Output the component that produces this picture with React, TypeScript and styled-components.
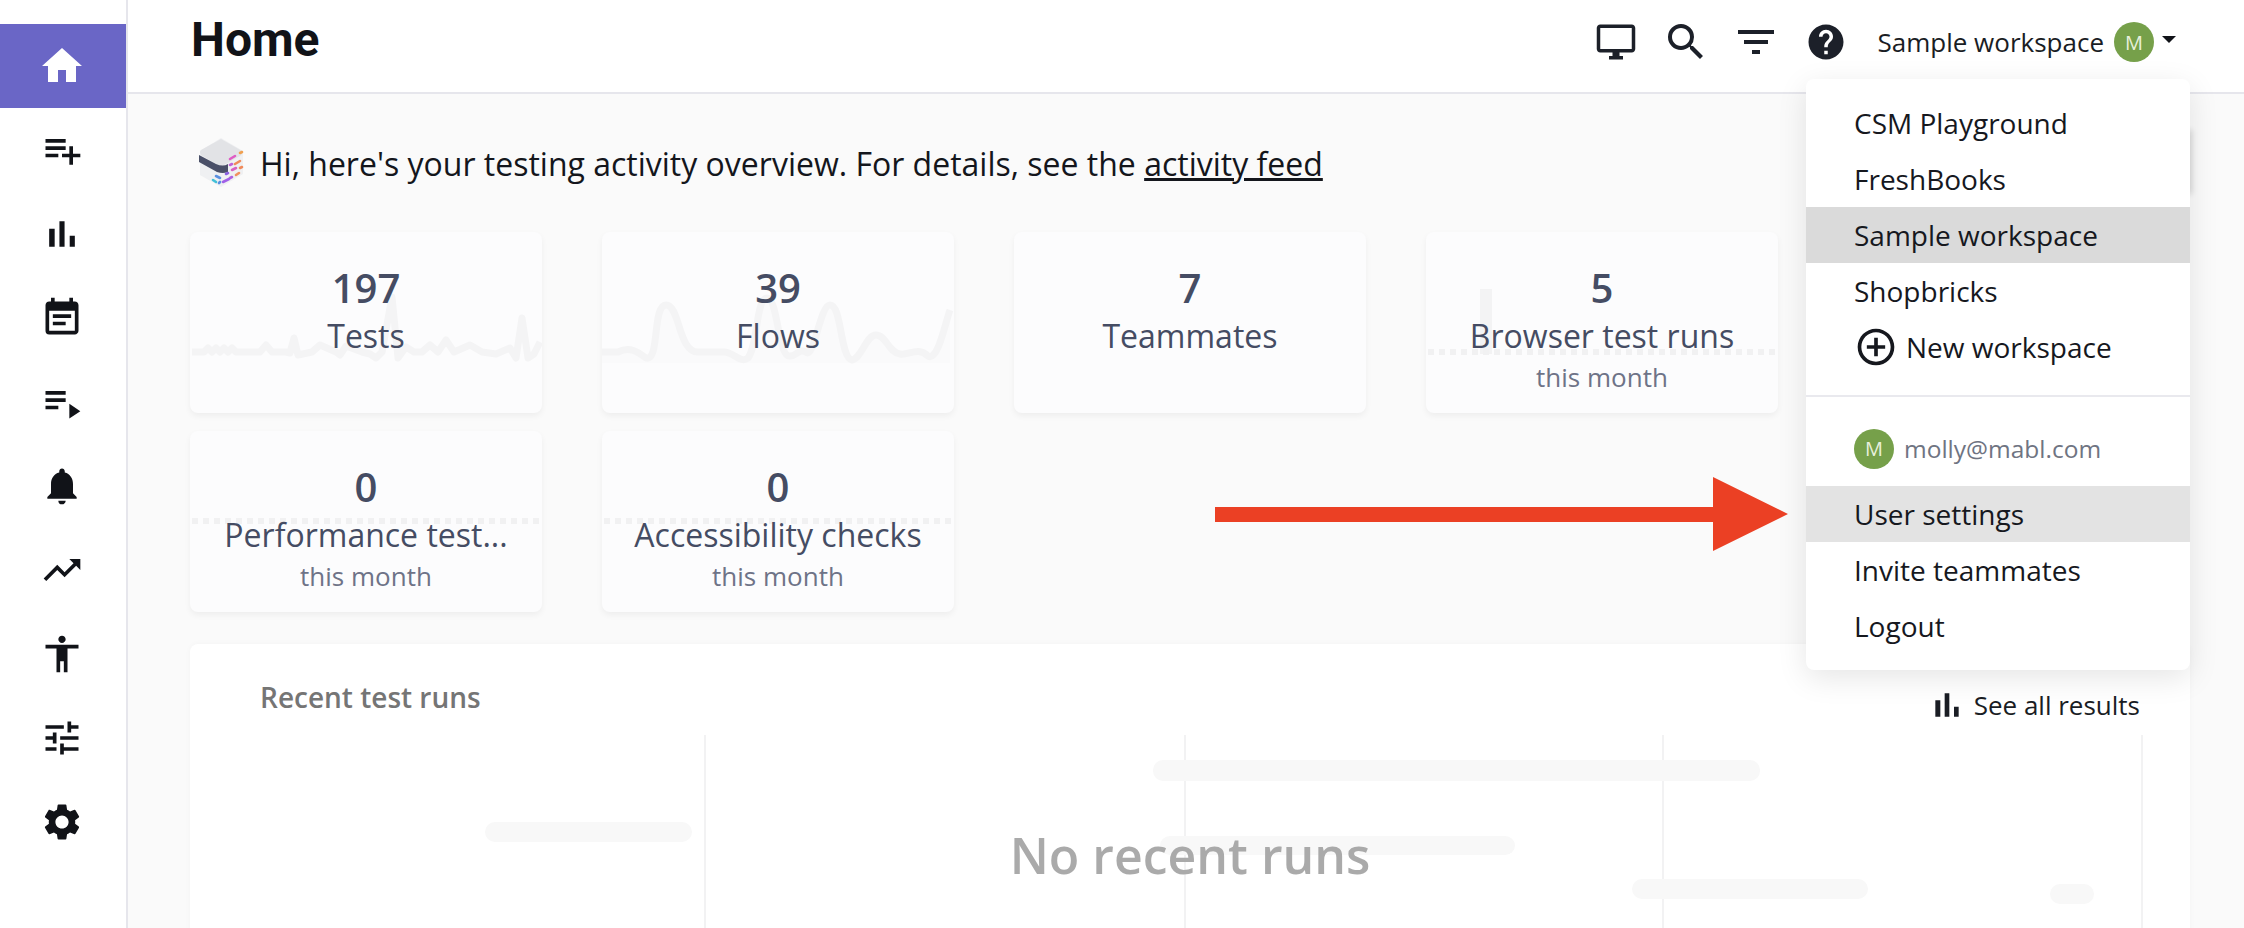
import React from 'react';
import styled, {createGlobalStyle} from 'styled-components';
import {
    MdAccessibility,
    MdAddCircleOutline,
    MdEventNote,
    MdFilterList,
    MdHelp,
    MdHome,
    MdNotifications,
    MdOutlineDesktopWindows,
    MdPlaylistAdd,
    MdPlaylistPlay,
    MdSearch,
    MdSettings,
    MdTrendingUp,
    MdTune,
} from 'react-icons/md';

const GlobalStyle = createGlobalStyle`
    html, body {
        margin: 0;
        padding: 0;
        height: 928px;
        overflow: hidden;
        background: #fafafa;
        font-family: 'Open Sans', 'Liberation Sans', sans-serif;
    }
`;

const Shell = styled.div`
    position: relative;
    display: flex;
    width: 2244px;
    height: 928px;
    overflow: hidden;
`;

const Sidebar = styled.nav`
    box-sizing: border-box;
    flex: 0 0 128px;
    padding-top: 24px;
    background: #fff;
    border-right: 2px solid #e6e6ec;
`;

const NavItem = styled.div<{$active?: boolean}>`
    display: flex;
    align-items: center;
    justify-content: center;
    height: 84px;
    padding-right: 2px;
    color: ${(p) => (p.$active ? '#fff' : '#111318')};
    background: ${(p) => (p.$active ? '#6a66c6' : 'transparent')};
`;

const Main = styled.div`
    flex: 1;
    min-width: 0;
`;

const Header = styled.header`
    box-sizing: border-box;
    display: flex;
    align-items: center;
    justify-content: space-between;
    height: 94px;
    padding: 0 68px 8px 63px;
    background: #fff;
    border-bottom: 2px solid #e6e6ec;
`;

const Title = styled.h1`
    margin: -4px 0 0;
    font-family: Roboto, 'Liberation Sans', sans-serif;
    font-size: 48px;
    font-weight: 700;
    line-height: 60px;
    color: #111318;
`;

const HeaderActions = styled.div`
    display: flex;
    align-items: center;
    color: #1c2029;
`;

const HeaderIcon = styled.span`
    display: flex;
    align-items: center;
    justify-content: center;
    width: 70px;
    height: 48px;
`;

const WorkspaceName = styled.span`
    margin-left: 17px;
    font-size: 26px;
    line-height: 36px;
    color: #1a1d24;
`;

const Avatar = styled.span<{$size: number}>`
    display: inline-flex;
    align-items: center;
    justify-content: center;
    flex: none;
    width: ${(p) => p.$size}px;
    height: ${(p) => p.$size}px;
    border-radius: 50%;
    background: #76a04a;
    color: #e8f0dc;
    font-size: ${(p) => Math.round(p.$size * 0.5)}px;
`;

const HeaderAvatar = styled(Avatar)`
    margin-left: 10px;
`;

const Caret = styled.span`
    width: 0;
    height: 0;
    margin: -6px 0 0 8px;
    border-left: 7px solid transparent;
    border-right: 7px solid transparent;
    border-top: 7px solid #111318;
`;

const Content = styled.div`
    padding: 0 54px 0 62px;
`;

const Welcome = styled.div`
    display: flex;
    align-items: center;
    gap: 15px;
    height: 138px;
    padding-left: 9px;
    font-size: 32px;
    color: #14161c;
`;

const FeedLink = styled.span`
    text-decoration: underline;
`;

// sits under the open menu, only its shadow shows past the menu's right edge
const WelcomeAction = styled.div`
    width: 240px;
    height: 64px;
    margin-left: auto;
    margin-top: -2px;
    background: #fff;
    box-shadow: 2px 0 6px rgba(0, 0, 0, 0.14);
`;

const CardGrid = styled.div`
    display: grid;
    grid-template-columns: repeat(4, 352px);
    grid-auto-rows: 181px;
    column-gap: 60px;
    row-gap: 18px;
`;

const Card = styled.div`
    position: relative;
    display: flex;
    flex-direction: column;
    align-items: center;
    padding-top: 30px;
    box-sizing: border-box;
    overflow: hidden;
    background: #fcfcfd;
    border-radius: 8px;
    box-shadow: 0 3px 6px rgba(0, 0, 0, 0.05);
    color: #454c63;
`;

const Spark = styled.svg`
    position: absolute;
    left: 0;
    top: 0;
`;

const CardValue = styled.div`
    position: relative;
    font-size: 40px;
    font-weight: 600;
    line-height: 52px;
`;

const CardLabel = styled.div`
    position: relative;
    font-size: 32px;
    line-height: 44px;
    white-space: nowrap;
`;

const CardNote = styled.div`
    position: relative;
    margin-top: 2px;
    font-size: 26px;
    line-height: 34px;
    color: #6e7387;
`;

const Panel = styled.section`
    position: relative;
    margin-top: 32px;
    height: 300px;
    background: #fff;
    border-radius: 8px 8px 0 0;
    box-shadow: 0 0 6px rgba(0, 0, 0, 0.03);
`;

const PanelHead = styled.div`
    display: flex;
    align-items: flex-start;
    justify-content: space-between;
    padding: 35px 50px 0 70px;
`;

const PanelTitle = styled.div`
    font-size: 28px;
    font-weight: 600;
    line-height: 36px;
    color: #757575;
`;

const ResultsLink = styled.div`
    display: flex;
    align-items: center;
    gap: 7px;
    margin-top: 6px;
    font-size: 26px;
    line-height: 36px;
    color: #1a1d24;
`;

const RunsChart = styled.svg`
    position: absolute;
    left: 0;
    top: 91px;
`;

const EmptyText = styled.div`
    position: absolute;
    left: 0;
    right: 0;
    top: 178px;
    text-align: center;
    font-size: 50px;
    font-weight: 600;
    line-height: 66px;
    color: #aaa;
`;

const Menu = styled.div`
    position: absolute;
    left: 1806px;
    top: 79px;
    width: 384px;
    padding: 16px 0;
    background: #fff;
    border-radius: 8px;
    box-shadow: 0 8px 30px rgba(0, 0, 0, 0.1);
`;

const MenuItem = styled.div<{$tone?: string}>`
    display: flex;
    align-items: center;
    height: 56px;
    padding: 0 48px;
    font-size: 28px;
    color: #16181e;
    background: ${(p) => p.$tone || 'transparent'};
`;

const NewWorkspace = styled(MenuItem)`
    gap: 8px;
`;

const MenuDivider = styled.div`
    height: 2px;
    margin: 20px 0 0;
    background: #e9e9ee;
`;

const UserRow = styled.div`
    box-sizing: border-box;
    display: flex;
    align-items: center;
    gap: 10px;
    height: 89px;
    padding: 14px 48px 0;
    font-size: 24.5px;
    color: #6f7482;
`;

const ArrowMark = styled.svg`
    position: absolute;
    left: 1215px;
    top: 477px;
`;

const testsLine = 'M2 120 L14 120 L18 116 L22 120 L26 116 L30 120 L34 116 L38 120 L42 116 L46 120 L70 120 L76 113 L82 120 L96 120 L100 121 L104 106 L108 123 L122 120 L130 113 L146 120 L150 123 L156 114 L172 120 L180 122 L186 126 L192 120 L202 65 L208 126 L216 115 L224 120 L232 120 L240 113 L248 120 L256 108 L264 120 L280 113 L292 120 L306 122 L320 116 L326 126 L332 86 L338 126 L344 122 L350 110';
const flowsLine = 'M0 120 L16 120 C28 114 36 120 44 126 C58 130 50 73 64 73 C78 73 76 120 96 120 L122 120 C132 120 138 132 146 126 C156 113 154 66 165 66 C176 66 176 126 188 124 C196 124 196 116 204 120 C212 128 218 73 228 73 C240 73 238 126 250 128 C260 126 264 103 274 103 C284 103 286 120 298 122 C306 124 316 114 326 124 C336 130 344 88 348 78';

const BackgroundLine = ({d, area}: {d: string; area?: boolean}) => (
    <>
        {area && (
            <path
                d={`${d} V131 H0 Z`}
                fill='#fafafb'
            />
        )}
        <path
            d={d}
            fill='none'
            stroke='#f4f4f5'
            strokeWidth={7}
            strokeLinejoin='round'
        />
    </>
);

const DottedLine = ({y}: {y: number}) => (
    <line
        x1={2}
        x2={350}
        y1={y}
        y2={y}
        stroke='#f1f1f2'
        strokeWidth={6}
        strokeDasharray='6 5'
    />
);

const ChartIcon = ({size}: {size: number}) => (
    <svg
        width={size}
        height={size}
        viewBox='0 0 24 24'
        fill='currentColor'
    >
        <path d='M5 9.2h3V19H5zM10.6 5h2.8v14h-2.8zm5.6 8H19v6h-2.8z'/>
    </svg>
);

const CubeLogo = () => (
    <svg
        width={46}
        height={50}
        viewBox='0 0 46 50'
    >
        <path
            d='M22 0 L44 13 V36 L22 49 L1 37 V13 Z'
            fill='#eff0f2'
        />
        <path
            d='M22 1 L43 13 Q44 16 41 18 L25 27 Q22 28 19 27 L2 17 Q0 14 2 12 Z'
            fill='#e2e3e6'
        />
        <path
            d='M0 17 L17 26 Q24 29 29 26 V34 Q24 36 18 34 L0 24 Z'
            fill='#4a5068'
        />
        <g
            strokeWidth={2.6}
            strokeLinecap='round'
            fill='none'
        >
            <path d='M31 21 L36 18' stroke='#df5cc4'/>
            <path d='M41 15 L43 14' stroke='#f0a050'/>
            <path d='M36 26 L41 23' stroke='#f08a5a'/>
            <path d='M31 27 L33 26' stroke='#c060d8'/>
            <path d='M33 32 L37 30' stroke='#d860c0'/>
            <path d='M41 30 L43 29' stroke='#f08a5a'/>
            <path d='M37 37 L40 35' stroke='#f09060'/>
            <path d='M27 36 L29 35' stroke='#8a60e0'/>
            <path d='M31 40 L33 39' stroke='#b060e0'/>
            <path d='M24 44 L30 41' stroke='#a060e8'/>
            <path d='M17 38 L21 40' stroke='#5a90e0'/>
            <path d='M20 45 L21 44' stroke='#5a90e0'/>
            <path d='M14 42 L17 44' stroke='#40c0d8'/>
        </g>
    </svg>
);

const navIcons = [
    {key: 'home', Icon: MdHome, size: 48},
    {key: 'add', Icon: MdPlaylistAdd, size: 44},
    {key: 'chart', Icon: ChartIcon, size: 44},
    {key: 'event', Icon: MdEventNote, size: 44},
    {key: 'play', Icon: MdPlaylistPlay, size: 44},
    {key: 'bell', Icon: MdNotifications, size: 44},
    {key: 'trend', Icon: MdTrendingUp, size: 44},
    {key: 'access', Icon: MdAccessibility, size: 44},
    {key: 'tune', Icon: MdTune, size: 44},
    {key: 'gear', Icon: MdSettings, size: 44},
];

const App = () => {
    return (
        <Shell>
            <GlobalStyle/>
            <Sidebar>
                {navIcons.map(({key, Icon, size}, index) => (
                    <NavItem
                        key={key}
                        $active={index === 0}
                    >
                        <Icon size={size}/>
                    </NavItem>
                ))}
            </Sidebar>
            <Main>
                <Header>
                    <Title>{'Home'}</Title>
                    <HeaderActions>
                        <HeaderIcon><MdOutlineDesktopWindows size={42}/></HeaderIcon>
                        <HeaderIcon><MdSearch size={48}/></HeaderIcon>
                        <HeaderIcon><MdFilterList size={48}/></HeaderIcon>
                        <HeaderIcon><MdHelp size={42}/></HeaderIcon>
                        <WorkspaceName>{'Sample workspace'}</WorkspaceName>
                        <HeaderAvatar $size={40}>{'M'}</HeaderAvatar>
                        <Caret/>
                    </HeaderActions>
                </Header>
                <Content>
                    <Welcome>
                        <CubeLogo/>
                        <span>
                            {"Hi, here's your testing activity overview. For details, see the "}
                            <FeedLink>{'activity feed'}</FeedLink>
                        </span>
                        <WelcomeAction/>
                    </Welcome>
                    <CardGrid>
                        <Card>
                            <Spark
                                width={352}
                                height={182}
                            >
                                <BackgroundLine d={testsLine}/>
                            </Spark>
                            <CardValue>{'197'}</CardValue>
                            <CardLabel>{'Tests'}</CardLabel>
                        </Card>
                        <Card>
                            <Spark
                                width={352}
                                height={182}
                            >
                                <BackgroundLine
                                    d={flowsLine}
                                    area={true}
                                />
                            </Spark>
                            <CardValue>{'39'}</CardValue>
                            <CardLabel>{'Flows'}</CardLabel>
                        </Card>
                        <Card>
                            <CardValue>{'7'}</CardValue>
                            <CardLabel>{'Teammates'}</CardLabel>
                        </Card>
                        <Card>
                            <Spark
                                width={352}
                                height={182}
                            >
                                <rect
                                    x={54}
                                    y={57}
                                    width={12}
                                    height={65}
                                    fill='#f3f3f4'
                                />
                                <DottedLine y={120}/>
                            </Spark>
                            <CardValue>{'5'}</CardValue>
                            <CardLabel>{'Browser test runs'}</CardLabel>
                            <CardNote>{'this month'}</CardNote>
                        </Card>
                        <Card>
                            <Spark
                                width={352}
                                height={182}
                            >
                                <DottedLine y={90}/>
                            </Spark>
                            <CardValue>{'0'}</CardValue>
                            <CardLabel>{'Performance test...'}</CardLabel>
                            <CardNote>{'this month'}</CardNote>
                        </Card>
                        <Card>
                            <Spark
                                width={352}
                                height={182}
                            >
                                <DottedLine y={90}/>
                            </Spark>
                            <CardValue>{'0'}</CardValue>
                            <CardLabel>{'Accessibility checks'}</CardLabel>
                            <CardNote>{'this month'}</CardNote>
                        </Card>
                    </CardGrid>
                    <Panel>
                        <RunsChart
                            width={2000}
                            height={200}
                        >
                            <g stroke='#f2f2f3' strokeWidth={2}>
                                <line x1={515} x2={515} y1={0} y2={200}/>
                                <line x1={995} x2={995} y1={0} y2={200}/>
                                <line x1={1473} x2={1473} y1={0} y2={200}/>
                                <line x1={1952} x2={1952} y1={0} y2={200}/>
                            </g>
                            <g fill='#f8f8f8'>
                                <rect x={295} y={87} width={207} height={20} rx={10}/>
                                <rect x={963} y={25} width={607} height={21} rx={10}/>
                                <rect x={970} y={101} width={355} height={19} rx={10}/>
                                <rect x={1442} y={144} width={236} height={20} rx={10}/>
                                <rect x={1860} y={149} width={44} height={20} rx={10}/>
                            </g>
                        </RunsChart>
                        <PanelHead>
                            <PanelTitle>{'Recent test runs'}</PanelTitle>
                            <ResultsLink>
                                <ChartIcon size={40}/>
                                {'See all results'}
                            </ResultsLink>
                        </PanelHead>
                        <EmptyText>{'No recent runs'}</EmptyText>
                    </Panel>
                </Content>
            </Main>
            <Menu>
                <MenuItem>{'CSM Playground'}</MenuItem>
                <MenuItem>{'FreshBooks'}</MenuItem>
                <MenuItem $tone='#dadada'>{'Sample workspace'}</MenuItem>
                <MenuItem>{'Shopbricks'}</MenuItem>
                <NewWorkspace>
                    <MdAddCircleOutline size={44}/>
                    {'New workspace'}
                </NewWorkspace>
                <MenuDivider/>
                <UserRow>
                    <Avatar $size={40}>{'M'}</Avatar>
                    {'molly@mabl.com'}
                </UserRow>
                <MenuItem $tone='#e3e3e3'>{'User settings'}</MenuItem>
                <MenuItem>{'Invite teammates'}</MenuItem>
                <MenuItem>{'Logout'}</MenuItem>
            </Menu>
            <ArrowMark
                width={574}
                height={75}
            >
                <path
                    d='M0 30 H498 V0 L573 37 L498 74 V45 H0 Z'
                    fill='#eb4024'
                />
            </ArrowMark>
        </Shell>
    );
};

export default App;
